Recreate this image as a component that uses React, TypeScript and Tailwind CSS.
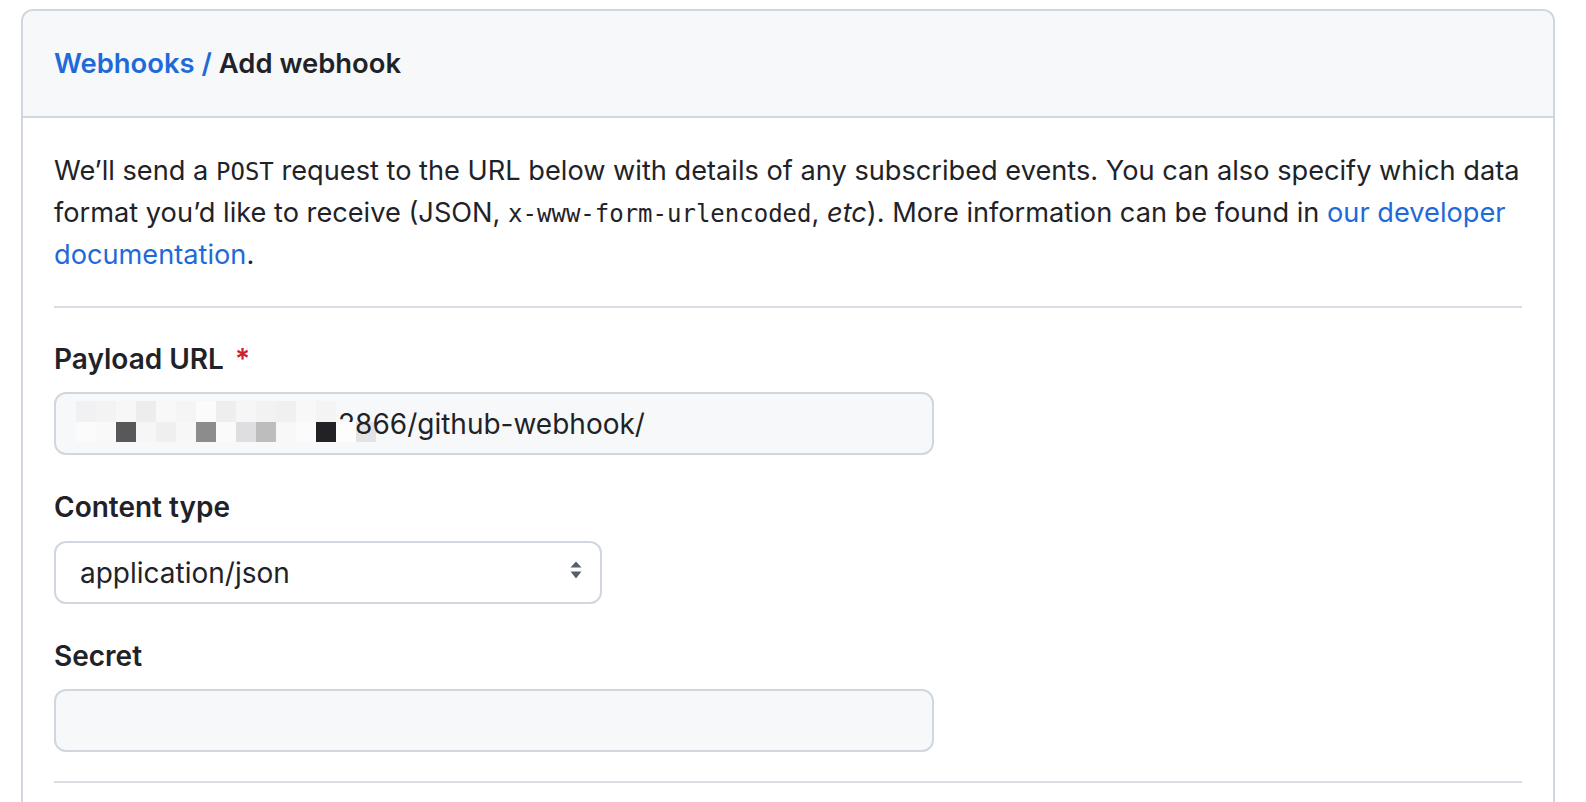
import React from "react";

const font = { fontFamily: "Inter, 'Noto Sans', sans-serif" };
const mono = { fontFamily: "'DejaVu Sans Mono', 'Liberation Mono', monospace" };

// pixel mosaic that hides the host part of the url
const mosaicTop = ["#f1f1f3", "#f3f3f4", "#f7f7f8", "#ededee", "#f8f8f9", "#f5f5f6", "#fbfbfb", "#eeeeef", "#f6f6f7", "#f2f2f3", "#f0f0f1", "#f8f8f8", "#f4f4f5"];
const mosaicBottom = ["#fbfbfc", "#f9f9fa", "#58585b", "#f6f6f7", "#efeff0", "#f7f7f8", "#8c8c8d", "#fafafa", "#dedee0", "#bdbdbe", "#f8f8f9", "#fbfbfb", "#222226", "#fdfdfd"];

const Mosaic: React.FC = () => (
  <>
    <div className="absolute left-[300px] top-[28px] w-[20px] h-[20px] bg-[#e3e3e6]" />
    <div className="absolute z-20 left-[20px] top-[7px] flex flex-col">
      <div className="flex">
        {mosaicTop.map((c, i) => (
          <div key={i} className="w-[20px] h-[21px]" style={{ backgroundColor: c }} />
        ))}
      </div>
      <div className="flex">
        {mosaicBottom.map((c, i) => (
          <div key={i} className="w-[20px] h-[20px]" style={{ backgroundColor: c }} />
        ))}
      </div>
    </div>
  </>
);

const SelectArrows: React.FC = () => (
  <svg width="12" height="18" viewBox="0 0 12 18" className="absolute right-[18px] top-[18px]">
    <path d="M0.5 6.5 L6 0.5 L11.5 6.5 Z" fill="#57606a" />
    <path d="M0.5 10.5 L6 17.5 L11.5 10.5 Z" fill="#57606a" />
  </svg>
);

const App: React.FC = () => {
  return (
    <div className="bg-white h-screen overflow-hidden pl-[21px] pr-[31px] pt-[9px] text-[#1f2328]" style={font}>
      <div className="border-2 border-b-0 border-[#d0d7de] rounded-t-[12px] min-h-[800px]">
        <div className="bg-[#f6f8fa] h-[107px] flex items-center px-[31px] border-b-2 border-[#d0d7de] rounded-t-[10px]">
          <h2 className="text-[27.4px] font-semibold leading-[41px]">
            <a className="text-[#1f6ad8]" href="#">Webhooks /</a> Add webhook
          </h2>
        </div>
        <div className="px-[31px] pt-[32px]">
          <p className="text-[27.2px] leading-[42px]">
            We’ll send a <code className="text-[24px] leading-none" style={mono}>POST</code> request to the URL below with details of any subscribed events. You can also specify which data format you’d like to receive (JSON, <code className="text-[24px] leading-none" style={mono}>x-www-form-urlencoded</code>, <em>etc</em>). More information can be found in <a href="#" className="text-[#1f6ad8]">our developer documentation</a>.
          </p>
          <hr className="mt-[30px] border-t-2 border-[#d8dee4]" />

          <div className="pt-[31px] flex flex-col">
            <label className="text-[28px] font-semibold leading-[41px]">
              Payload URL <span className="text-[#cf222e] ml-[4px]">*</span>
            </label>
            <div className="relative mt-[12px] w-[880px] h-[63px] border-2 border-[#d0d7de] rounded-[12px] bg-[#f6f8fa] flex items-center pl-[282px] text-[28px] overflow-hidden">
              <span className="relative z-10">2866/github-webhook/</span>
              <Mosaic />
            </div>

            <label className="mt-[32px] text-[28px] font-semibold leading-[41px]">Content type</label>
            <div className="relative mt-[13px] w-[548px] h-[63px] border-2 border-[#d0d7de] rounded-[12px] bg-white flex items-center pl-[24px] text-[28px]">
              application/json
              <SelectArrows />
            </div>

            <label className="mt-[32px] text-[28px] font-semibold leading-[41px]">Secret</label>
            <div className="mt-[12px] w-[880px] h-[63px] border-2 border-[#d0d7de] rounded-[12px] bg-[#f6f8fa]" />

            <hr className="mt-[29px] border-t-2 border-[#d8dee4]" />
          </div>
        </div>
      </div>
    </div>
  );
};

export default App;
